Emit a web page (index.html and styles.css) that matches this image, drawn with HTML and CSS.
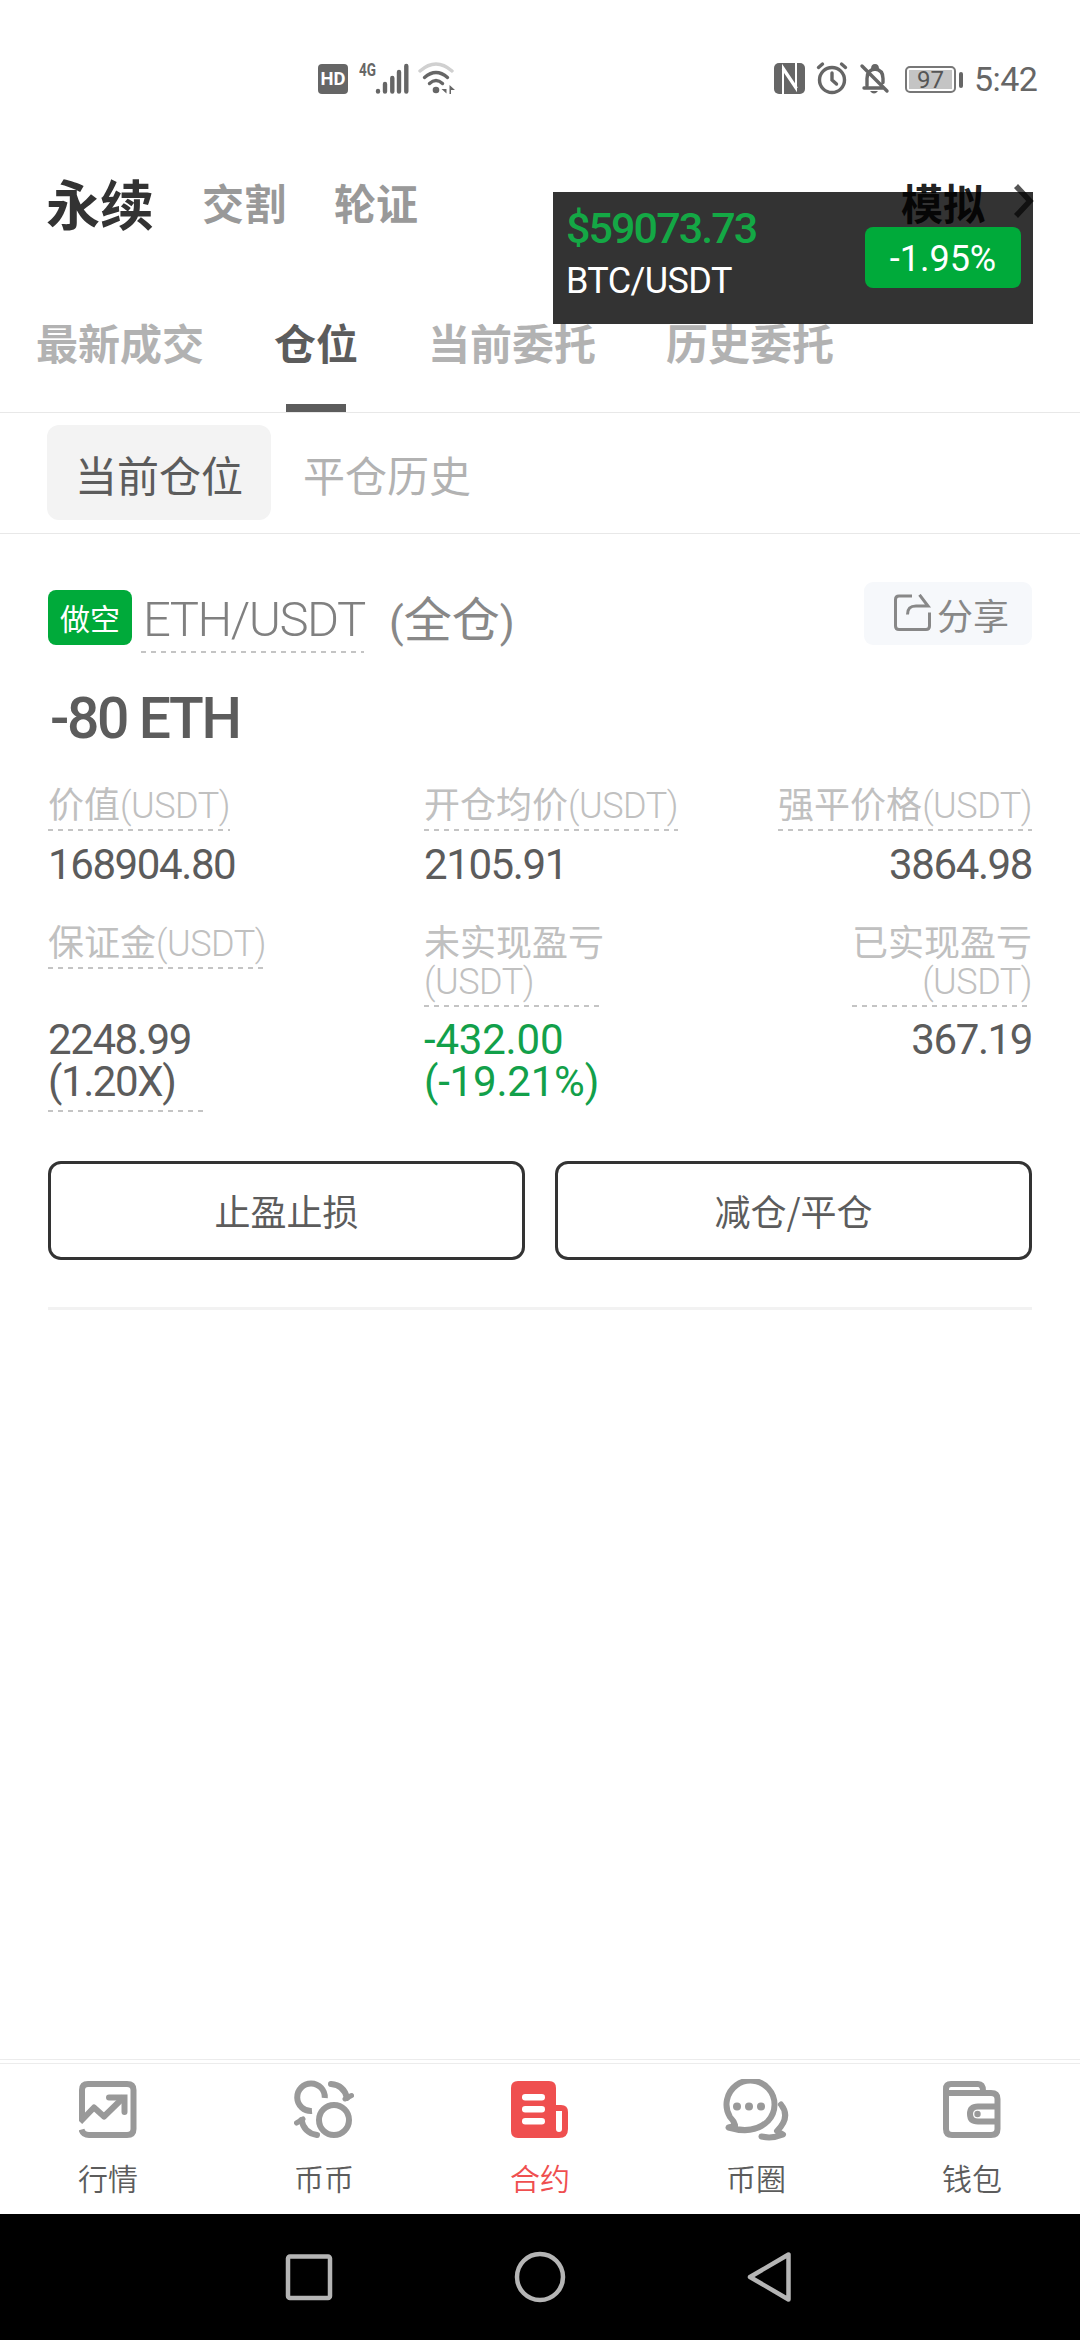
FILE: index.html
```html
<!DOCTYPE html>
<html lang="zh-CN">
<head>
<meta charset="utf-8">
<title>合约仓位</title>
<link rel="stylesheet" href="styles.css">
</head>
<body>
<div class="screen">
  <div class="status">
    <svg class="status-left" width="140" height="40" viewBox="0 0 140 40">
      <rect x="0" y="5" width="30" height="30" rx="4" fill="#666"/>
      <text x="15" y="26" class="hd" text-anchor="middle" textLength="25" lengthAdjust="spacingAndGlyphs">HD</text>
      <text x="41" y="17" class="fourg" textLength="17" lengthAdjust="spacingAndGlyphs">4G</text>
      <g stroke="#666" stroke-width="4.4" stroke-linecap="round">
        <path d="M60 32v.5M67 25v7.5M74.300 19v13.500M81 13v19.500M88.300 7v25.500"/>
      </g>
      <g fill="none" stroke-width="3.400" stroke-linecap="round">
        <path d="M102 12q16-14 32 0" stroke="#d0d0d0"/>
        <path d="M106.500 18.500q11.500-10 23 0M111.500 24.500q6.500-6 13 0" stroke="#666"/>
      </g>
      <circle cx="118" cy="31" r="3.300" fill="#666"/>
      <path d="M128.500 26v8.500l-5-4.500h5M131.500 26l5.500 5h-4v4h-1.500z" fill="#666"/>
    </svg>
    <div class="status-right">
      <svg width="144" height="40" viewBox="0 0 144 40">
        <rect x="0" y="4" width="31" height="31" rx="5" fill="#666"/>
        <path d="M9 35V8l14 21M22 4v26L8.500 10" fill="none" stroke="#fff" stroke-width="2"/>
        <g fill="none" stroke="#666" stroke-width="3.400" stroke-linecap="round">
          <circle cx="58" cy="21" r="12.500"/>
          <path d="M58 14v7l4.500 4M44.500 8.500l4-3.500M71.500 8.500l-4-3.500"/>
          <path d="M93 26.500v-7q0-8.500 8-9.500 8 1 8 9.500v4M90 29h19M88 7l25 25"/>
        </g>
        <path d="M97 10q0-5 4-5t4 5M96 32h8q-4 5-8 0z" fill="#666"/>
      </svg>
      <div class="battery"><span>97</span></div>
      <span class="clock">5:42</span>
    </div>
  </div>

  <header class="header">
    <span class="mode mode-on">永续</span>
    <span class="mode">交割</span>
    <span class="mode">轮证</span>
    <span class="mode demo">模拟</span>
    <svg class="chevron" width="21" height="36" viewBox="0 0 21 36"><path d="M3 3l14 15L3 33" fill="none" stroke="#555" stroke-width="5.500"/></svg>
  </header>

  <aside class="ticker">
    <div class="ticker-text">
      <span class="ticker-price">$59073.73</span>
      <span class="ticker-pair">BTC/USDT</span>
    </div>
    <span class="ticker-chip">-1.95%</span>
  </aside>

  <nav class="tabs">
    <span class="tab">最新成交</span>
    <span class="tab tab-on">仓位</span>
    <span class="tab">当前委托</span>
    <span class="tab">历史委托</span>
  </nav>

  <nav class="subtabs">
    <span class="pill pill-on">当前仓位</span>
    <span class="pill">平仓历史</span>
  </nav>

  <main class="position">
    <div class="title">
      <span class="side">做空</span>
      <span class="pair dashed">ETH/USDT</span>
      <span class="margin-mode"><i>(</i>全仓<i>)</i></span>
      <span class="share">
        <svg width="38" height="38" viewBox="0 0 38 38" fill="none" stroke="#888" stroke-width="3"><path d="M18 2H5Q1.500 2 1.500 5.500V32Q1.500 35.500 5 35.500H32Q35.500 35.500 35.500 32V18.500M13.500 20.500C13.500 14 16.500 12 22 12H34L25.500 .800"/></svg>
        分享
      </span>
    </div>
    <div class="amount">-80 ETH</div>

    <div class="stats stats-top">
      <div class="stat"><span class="label dashed">价值<b>(USDT)</b></span><span class="value">168904.80</span></div>
      <div class="stat"><span class="label dashed">开仓均价<b>(USDT)</b></span><span class="value">2105.91</span></div>
      <div class="stat end"><span class="label dashed">强平价格<b>(USDT)</b></span><span class="value">3864.98</span></div>
    </div>
    <div class="stats stats-bottom">
      <div class="stat"><div class="label-box"><span class="label dashed">保证金<b>(USDT)</b></span></div><span class="value dashed leverage">2248.99<br>(1.20X)</span></div>
      <div class="stat"><div class="label-box"><span class="label dashed">未实现盈亏<br><b>(USDT)</b></span></div><span class="value loss">-432.00<br>(-19.21%)</span></div>
      <div class="stat end"><div class="label-box"><span class="label dashed">已实现盈亏<br><b>(USDT)</b></span></div><span class="value">367.19</span></div>
    </div>

    <div class="actions">
      <span class="button">止盈止损</span>
      <span class="button">减仓/平仓</span>
    </div>
  </main>

  <footer class="bottom">
    <div class="dock">
      <div class="dock-item">
        <svg width="58" height="62" viewBox="0 -2 58 62" fill="none" stroke="#999" stroke-width="6"><path d="M3 38V9Q3 3 9 3H48Q54.500 3 54.500 9V48Q54.500 54 48 54H10Q4 54 2.500 48.500"/><path d="M1 41L15 26.500L25 35.500L45 16" stroke-linejoin="round"/><path d="M30 16.500H45.500V31" stroke-linecap="round"/></svg>
        <span>行情</span>
      </div>
      <div class="dock-item">
        <svg width="60" height="62" viewBox="0 -2 60 62" fill="none" stroke="#999" stroke-width="6"><circle cx="40" cy="39" r="15"/><path d="M30.800 17A13.800 13.800 0 1 0 18 30"/><path d="M37 3Q50 4 53 17M23 54Q10 52 7.500 39" stroke-linecap="round"/><path d="M51 18L57.500 14.500M9 38L2.500 42" stroke-width="5" stroke-linecap="round"/></svg>
        <span>币币</span>
      </div>
      <div class="dock-item dock-on">
        <svg width="58" height="62" viewBox="0 -2 58 62"><path d="M7 0H38Q45 0 45 7V24H50Q57 24 57 31V48Q57 57 48 57H7Q0 57 0 50V7Q0 0 7 0Z" fill="#ef4f4f"/><g fill="#fff"><rect x="11" y="13" width="23" height="6.500" rx="3.200"/><rect x="11" y="25" width="23" height="6.500" rx="3.200"/><rect x="11" y="37" width="23" height="6.500" rx="3.200"/><path d="M45 30H51V48Q51 51 48 51T45 48Z"/></g></svg>
        <span>合约</span>
      </div>
      <div class="dock-item">
        <svg width="68" height="62" viewBox="0 0 68 62" fill="none" stroke="#999" stroke-width="6" stroke-linecap="round" stroke-linejoin="round"><path d="M13 46Q12 42 8 38A24 24 0 1 1 46 42Q32 56 6.500 48.500L13 47"/><path d="M59 25.500Q69 38 55 52L61 55.500Q50 60 39.500 57.500"/><g fill="#999" stroke="none"><circle cx="15" cy="27.500" r="4"/><circle cx="27" cy="27.500" r="4"/><circle cx="39" cy="27.500" r="4"/></g></svg>
        <span>币圈</span>
      </div>
      <div class="dock-item">
        <svg width="58" height="62" viewBox="0 -2 58 62" fill="none" stroke="#999" stroke-width="6"><path d="M3 12V8Q3 3 8 3H35Q40 3 40 10M3 12H48Q54.500 12 54.500 18V48Q54.500 54 48 54H9Q3 54 3 48V9M54 25.500H35Q27 25.500 27 33T35 40.500H54"/><circle cx="34.500" cy="33" r="3.200" fill="#999" stroke="none"/></svg>
        <span>钱包</span>
      </div>
    </div>
    <div class="sysnav">
      <svg width="52" height="52" viewBox="0 0 52 52"><rect x="5" y="5.500" width="42" height="41.500" rx="2"/></svg>
      <svg width="52" height="52" viewBox="0 0 52 52"><circle cx="26" cy="26" r="23"/></svg>
      <svg width="52" height="52" viewBox="0 0 52 52"><path d="M43.500 3.500V48.500L5 26Z" stroke-linejoin="round"/></svg>
    </div>
  </footer>
</div>
</body>
</html>
```
FILE: styles.css
```css
* { box-sizing: border-box; }
body {
  margin: 0;
  background: #fff;
  color: #5c5c5c;
  font-family: "Noto Sans CJK SC", sans-serif;
}
.screen {
  position: relative;
  display: flex;
  flex-direction: column;
  width: 1080px;
  height: 2340px;
}
svg { display: block; flex: none; }

/* status bar */
.status {
  display: flex;
  justify-content: space-between;
  align-items: center;
  height: 158px;
  padding: 0 44px 0 318px;
}
.hd { font: 700 18px Roboto, sans-serif; fill: #fff; }
.fourg { font: 700 18px Roboto, sans-serif; fill: #666; }
.status-right { display: flex; align-items: center; }
.battery {
  position: relative;
  width: 51px;
  height: 27px;
  margin: 0 18px 0 -13px;
  padding: 2px;
  border: 2px solid #777;
  border-radius: 5px;
}
.battery span {
  display: block;
  background: #c4c4c4;
  color: #555;
  font: 24px/20px Roboto, sans-serif;
  height: 19px;
  text-align: center;
}
.battery::after {
  content: "";
  position: absolute;
  left: 52px;
  top: 4px;
  width: 4px;
  height: 16px;
  border-radius: 2px;
  background: #666;
}
.clock {
  width: 62px;
  font: 34px/40px Roboto, sans-serif;
  letter-spacing: -0.6px;
  color: #666;
}

/* product header */
.header {
  display: flex;
  align-items: center;
  gap: 48px;
  height: 92px;
  padding: 0 46px;
}
.mode {
  font-size: 42px;
  line-height: 60px;
  font-weight: 700;
  color: #999;
  margin-top: -4px;
}
.mode-on { font-size: 54px; color: #333; margin-top: -2px; }
.demo { margin-left: auto; color: #222; }
.chevron { margin-left: -20px; margin-top: -6px; }

/* floating price ticker */
.ticker {
  position: absolute;
  left: 553px;
  top: 192px;
  width: 480px;
  height: 132px;
  display: flex;
  justify-content: space-between;
  align-items: flex-start;
  padding: 11px 12px 0 13px;
  background: rgba(0, 0, 0, 0.8);
  font-family: Roboto, sans-serif;
}
.ticker-text { display: flex; flex-direction: column; }
.ticker-price {
  font-size: 43px;
  line-height: 50px;
  font-weight: 500;
  letter-spacing: -1.9px;
  color: #14a845;
}
.ticker-pair {
  margin-top: 2px;
  font-size: 36px;
  line-height: 53px;
  letter-spacing: -0.6px;
  color: #fff;
}
.ticker-chip {
  width: 156px;
  height: 61px;
  margin-top: 24px;
  border-radius: 8px;
  background: #00aa3a;
  color: #fff;
  font-size: 36px;
  line-height: 65px;
  text-align: center;
}

/* tabs */
.tabs {
  display: flex;
  gap: 70px;
  height: 163px;
  padding: 69px 36px 0;
  border-bottom: 1px solid #e8e8e8;
}
.tab {
  display: flex;
  flex-direction: column;
  align-items: center;
  justify-content: space-between;
  font-size: 42px;
  line-height: 46px;
  font-weight: 700;
  color: #b2b2b2;
}
.tab-on { color: #5c5c5c; }
.tab-on::after {
  content: "";
  width: 60px;
  height: 8px;
  background: #5c5c5c;
}
.subtabs {
  display: flex;
  align-items: flex-start;
  gap: 4px;
  height: 121px;
  padding: 12px 47px 0;
  border-bottom: 1px solid #e8e8e8;
}
.pill {
  height: 95px;
  padding: 0 28px;
  border-radius: 12px;
  font-size: 42px;
  line-height: 97px;
  color: #b2b2b2;
}
.pill-on { background: #f3f3f3; color: #5c5c5c; }

/* position card */
.position {
  margin: 0 48px;
  padding-top: 48px;
  height: 776px;
  border-bottom: 3px solid #f2f2f2;
}
.dashed {
  background: repeating-linear-gradient(90deg, #c4c4c4 0 5px, transparent 5px 10px) left bottom / 100% 2px no-repeat;
}
.title { display: flex; height: 72px; }
.side {
  width: 84px;
  height: 55px;
  margin-top: 8px;
  border-radius: 8px;
  background: #00aa3a;
  color: #fff;
  font-size: 30px;
  line-height: 54px;
  text-align: center;
}
.pair {
  margin-left: 9px;
  padding-left: 2px;
  height: 71px;
  width: 223px;
  font: 300 49px/75px Roboto, sans-serif;
  letter-spacing: -1.5px;
  color: #808080;
}
.margin-mode {
  margin-left: 25px;
  font-size: 48px;
  line-height: 68px;
  color: #888;
}
.margin-mode i {
  font: 43px/60px Roboto, sans-serif;
}
.share {
  display: flex;
  align-items: center;
  gap: 5px;
  width: 168px;
  height: 63px;
  margin-left: auto;
  padding: 0 0 0 30px;
  border-radius: 9px;
  background: #f6f8fb;
  color: #888;
  font-size: 36px;
  line-height: 60px;
}
.share svg { margin-top: -1px; }
.amount {
  height: 129px;
  padding: 31px 0 0 2px;
  font: 500 57px/68px Roboto, sans-serif;
  letter-spacing: -2.4px;
}
.stats {
  display: grid;
  grid-template-columns: 376px 304px 304px;
}
.stats-top { height: 138px; }
.stats-bottom { height: 240px; }
.stat {
  display: flex;
  flex-direction: column;
  align-items: flex-start;
}
.end { align-items: flex-end; text-align: right; }
.label {
  display: block;
  padding-bottom: 6px;
  font-size: 36px;
  line-height: 38px;
  color: #c0c0c0;
}
.label b {
  font: 300 36px/38px Roboto, sans-serif;
  letter-spacing: -0.5px;
}
.label-box { height: 87px; }
.value {
  margin-top: 13px;
  font: 42px/42px Roboto, sans-serif;
  letter-spacing: -1.4px;
}
.label-box + .value { margin-top: 11px; }
.leverage { width: 156px; padding-bottom: 9px; }
.loss { color: #12a04a; letter-spacing: -0.2px; }
.actions { display: flex; gap: 30px; }
.button {
  flex: 1;
  height: 99px;
  border: 3px solid #333;
  border-radius: 13px;
  font-size: 36px;
  line-height: 92px;
  text-align: center;
}

/* bottom navigation */
.bottom { margin-top: auto; }
.dock {
  display: grid;
  grid-template-columns: repeat(5, 216px);
  height: 155px;
  padding-top: 15px;
  border-top: 1px solid #ececec;
  position: relative;
}
.dock::before {
  content: "";
  position: absolute;
  top: 3px;
  left: 0;
  right: 0;
  height: 1px;
  background: #ececec;
}
.dock-item {
  display: flex;
  flex-direction: column;
  align-items: center;
  font-size: 30px;
  line-height: 40px;
  font-weight: 350;
  gap: 16px;
  padding-top: 4px;
}
.dock-on { color: #ef4f4f; }
.sysnav {
  display: flex;
  justify-content: center;
  align-items: center;
  gap: 179px;
  height: 126px;
  background: #000;
}
.sysnav svg { fill: none; stroke: #b5b5b5; stroke-width: 4.5; }
```
